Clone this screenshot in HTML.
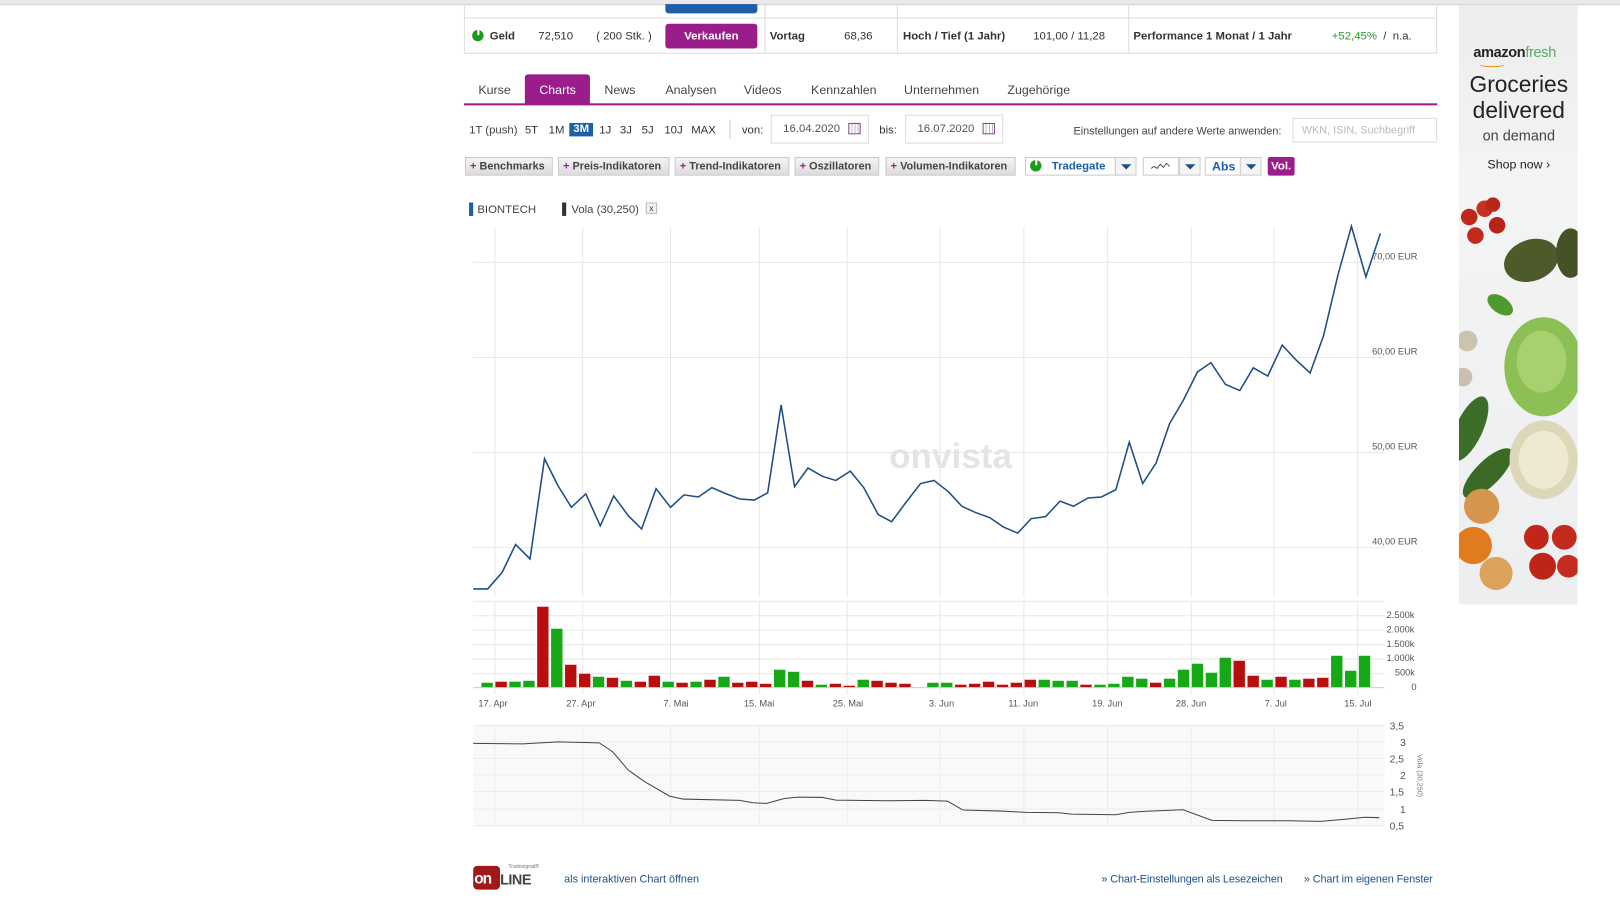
<!DOCTYPE html>
<html><head><meta charset="utf-8">
<style>
html,body{margin:0;padding:0;background:#fff;overflow:hidden;width:1620px;height:912px}
#w{position:absolute;left:0;top:0;width:1568px;height:883px;transform:scale(1.0332);transform-origin:0 0;font-family:"Liberation Sans",Arial,sans-serif;font-size:11px;color:#333}
.a{position:absolute;white-space:nowrap}
.b{font-weight:bold}
.btn{position:absolute;height:18px;top:152px;background:linear-gradient(#f4f4f4,#dcdcdc);border:1px solid #c8c8c8;box-sizing:border-box;font-size:10.5px;font-weight:bold;color:#444;line-height:16px;padding-left:4px}
.btn i{color:#9b1d8c;font-style:normal;font-weight:bold;margin-right:3px}
.wb{position:absolute;top:152px;height:18px;border:1px solid #ccc;box-sizing:border-box;background:#fff;color:#1a5fa8;font-weight:bold;line-height:16px}
.dd{position:absolute;top:152px;height:18px;width:21px;border:1px solid #ccc;box-sizing:border-box;background:#f4f4f4}
.dd:after{content:"";position:absolute;left:5px;top:6px;border-left:5px solid transparent;border-right:5px solid transparent;border-top:5px solid #1a4f8a}
.tab{position:absolute;top:80px;font-size:12px;color:#444}
.inp{position:absolute;top:111px;height:28px;border:1px solid #ddd;box-sizing:border-box;background:#fff;font-size:11px;color:#555;line-height:26px}
.lnk{color:#1f4f8f;font-size:10.5px}
</style></head><body><div id="w">
<div class="a" style="left:0;top:0;width:1568px;height:4px;background:#e9e9e9;border-bottom:1px solid #d0d0d0"></div>
<div class="a" style="left:449px;top:4px;width:942px;height:48px;border:1px solid #ddd;border-top:none;box-sizing:border-box"></div>
<div class="a" style="left:449px;top:17px;width:942px;height:1px;background:#ddd"></div>
<div class="a" style="left:740px;top:4px;width:1px;height:48px;background:#ddd"></div>
<div class="a" style="left:868px;top:4px;width:1px;height:48px;background:#ddd"></div>
<div class="a" style="left:1092px;top:4px;width:1px;height:48px;background:#ddd"></div>
<div class="a" style="left:644px;top:4px;width:89px;height:9px;background:#1a5fa8;border-radius:0 0 3px 3px"></div>
<div class="a" style="left:457px;top:29px;width:11px;height:11px;border-radius:50%;background:#1a9b1a"></div>
<div class="a" style="left:462px;top:28px;width:2px;height:6px;background:#fff"></div>
<div class="a b" style="left:474px;top:29px">Geld</div>
<div class="a" style="left:521px;top:29px">72,510</div>
<div class="a" style="left:577px;top:29px">( 200 Stk. )</div>
<div class="a b" style="left:644px;top:23px;width:89px;height:24px;background:#9b1d8c;color:#fff;text-align:center;line-height:24px;border-radius:3px">Verkaufen</div>
<div class="a b" style="left:745px;top:29px">Vortag</div>
<div class="a" style="left:817px;top:29px">68,36</div>
<div class="a b" style="left:874px;top:29px">Hoch / Tief (1 Jahr)</div>
<div class="a" style="left:1000px;top:29px">101,00 / 11,28</div>
<div class="a b" style="left:1097px;top:29px">Performance 1 Monat / 1 Jahr</div>
<div class="a" style="left:1289px;top:29px"><span style="color:#2a9a2a">+52,45%</span> &nbsp;/ &nbsp;n.a.</div>
<div class="a" style="left:508px;top:72px;width:63px;height:29px;background:#9b1d8c;border-radius:3px 3px 0 0"></div>
<div class="tab" style="left:463px">Kurse</div>
<div class="tab" style="left:522px;color:#fff">Charts</div>
<div class="tab" style="left:585px">News</div>
<div class="tab" style="left:644px">Analysen</div>
<div class="tab" style="left:720px">Videos</div>
<div class="tab" style="left:785px">Kennzahlen</div>
<div class="tab" style="left:875px">Unternehmen</div>
<div class="tab" style="left:975px">Zugehörige</div>
<div class="a" style="left:449px;top:100px;width:942px;height:2px;background:#9b1d8c"></div>
<div class="a" style="left:454px;top:120px;color:#444">1T (push)</div>
<div class="a" style="left:508px;top:120px">5T</div>
<div class="a" style="left:531px;top:120px">1M</div>
<div class="a b" style="left:551px;top:119px;width:23px;height:13px;background:#1a5fa8;color:#fff;text-align:center;line-height:13px">3M</div>
<div class="a" style="left:580px;top:120px">1J</div>
<div class="a" style="left:600px;top:120px">3J</div>
<div class="a" style="left:621px;top:120px">5J</div>
<div class="a" style="left:643px;top:120px">10J</div>
<div class="a" style="left:669px;top:120px">MAX</div>
<div class="a" style="left:706px;top:116px;width:1px;height:18px;background:#ccc"></div>
<div class="a" style="left:718px;top:120px">von:</div>
<div class="inp" style="left:746px;width:95px;padding-left:11px">16.04.2020</div>
<div class="a" style="left:821px;top:119px;width:10px;height:9px;border:1px solid #8a4a8a;background:repeating-linear-gradient(90deg,#fff 0 2px,#bbb 2px 3px)"></div>
<div class="a" style="left:851px;top:120px">bis:</div>
<div class="inp" style="left:876px;width:95px;padding-left:11px">16.07.2020</div>
<div class="a" style="left:951px;top:119px;width:10px;height:9px;border:1px solid #8a4a8a;background:repeating-linear-gradient(90deg,#fff 0 2px,#bbb 2px 3px)"></div>
<div class="a" style="left:1039px;top:121px;color:#444;font-size:10.5px">Einstellungen auf andere Werte anwenden:</div>
<div class="inp" style="left:1251px;width:140px;top:114px;height:24px;line-height:22px;padding-left:8px;color:#bbb;font-size:10.5px">WKN, ISIN, Suchbegriff</div>
<div class="btn" style="left:450px;width:85px"><i>+</i>Benchmarks</div>
<div class="btn" style="left:540px;width:108px"><i>+</i>Preis-Indikatoren</div>
<div class="btn" style="left:653px;width:111px"><i>+</i>Trend-Indikatoren</div>
<div class="btn" style="left:769px;width:82px"><i>+</i>Oszillatoren</div>
<div class="btn" style="left:857px;width:126px"><i>+</i>Volumen-Indikatoren</div>
<div class="wb" style="left:992px;width:88px;padding-left:25px">Tradegate</div>
<div class="a" style="left:997px;top:155px;width:11px;height:11px;border-radius:50%;background:#1a9b1a"></div>
<div class="a" style="left:1002px;top:154px;width:2px;height:6px;background:#fff"></div>
<div class="dd" style="left:1079px"></div>
<div class="wb" style="left:1106px;width:35px"><svg width="33" height="16"><polyline points="7,10 10,8 13,10 16,6 19,9 22,5 25,8" fill="none" stroke="#333" stroke-width="0.8"/></svg></div>
<div class="dd" style="left:1141px"></div>
<div class="wb" style="left:1166px;width:35px;padding-left:6px;font-size:12px">Abs</div>
<div class="dd" style="left:1200px"></div>
<div class="a b" style="left:1227px;top:152px;width:26px;height:18px;background:#9b1d8c;color:#fff;text-align:center;line-height:18px;border-radius:2px">Vol.</div>
<div class="a" style="left:454px;top:196px;width:4px;height:13px;background:#1a5fa8"></div>
<div class="a" style="left:462px;top:197px;color:#444">BIONTECH</div>
<div class="a" style="left:544px;top:196px;width:4px;height:13px;background:#333"></div>
<div class="a" style="left:553px;top:197px;color:#444">Vola (30,250)</div>
<div class="a" style="left:625px;top:196px;width:11px;height:11px;border:1px solid #bbb;box-sizing:border-box;background:#f2f2f2;font-size:8px;line-height:9px;text-align:center">x</div>
<svg class="a" style="left:0;top:0" width="1568" height="883">
<g stroke="#e8e8e8" stroke-width="1">
<line x1="479" y1="220" x2="479" y2="578"/><line x1="564" y1="220" x2="564" y2="578"/><line x1="649" y1="220" x2="649" y2="578"/><line x1="735" y1="220" x2="735" y2="578"/><line x1="820" y1="220" x2="820" y2="578"/><line x1="910" y1="220" x2="910" y2="578"/><line x1="991" y1="220" x2="991" y2="578"/><line x1="1072" y1="220" x2="1072" y2="578"/><line x1="1153" y1="220" x2="1153" y2="578"/><line x1="1233" y1="220" x2="1233" y2="578"/><line x1="1314" y1="220" x2="1314" y2="578"/>
<line x1="458" y1="254" x2="1340" y2="254"/><line x1="458" y1="346" x2="1340" y2="346"/><line x1="458" y1="438" x2="1340" y2="438"/><line x1="458" y1="530" x2="1340" y2="530"/>
<line x1="458" y1="582" x2="1340" y2="582"/><line x1="458" y1="596" x2="1340" y2="596"/><line x1="458" y1="610" x2="1340" y2="610"/><line x1="458" y1="624" x2="1340" y2="624"/><line x1="458" y1="638" x2="1340" y2="638"/><line x1="458" y1="652" x2="1340" y2="652"/>
<line x1="479" y1="582" x2="479" y2="672"/><line x1="564" y1="582" x2="564" y2="672"/><line x1="649" y1="582" x2="649" y2="672"/><line x1="735" y1="582" x2="735" y2="672"/><line x1="820" y1="582" x2="820" y2="672"/><line x1="910" y1="582" x2="910" y2="672"/><line x1="991" y1="582" x2="991" y2="672"/><line x1="1072" y1="582" x2="1072" y2="672"/><line x1="1153" y1="582" x2="1153" y2="672"/><line x1="1233" y1="582" x2="1233" y2="672"/><line x1="1314" y1="582" x2="1314" y2="672"/>
</g>
<line x1="458" y1="665.5" x2="1340" y2="665.5" stroke="#ccc"/>
<text x="920" y="453" font-family="Liberation Sans,sans-serif" font-size="34" font-weight="bold" fill="#e4e4e4" text-anchor="middle">onvista</text>
<polyline fill="none" stroke="#1f4e85" stroke-width="1.5" points="458,570 472,570 486,554 499,527 513,541 527,444 540,470 553,491 567,478 581,509 594,480 608,499 621,512 635,473 649,491 662,479 676,481 689,472 703,478 716,483 730,484 743,477 756,392 769,471 782,453 796,461 809,465 823,456 836,472 850,498 863,505 877,486 891,468 904,465 918,476 931,490 944,496 958,501 971,510 985,516 998,502 1012,500 1026,485 1039,490 1053,482 1066,481 1080,474 1093,428 1106,468 1119,448 1132,410 1145,388 1159,360 1172,351 1186,372 1200,378 1213,356 1227,364 1241,334 1254,348 1268,361 1281,325 1295,266 1308,219 1322,268 1336,226"/>
<g font-family="Liberation Sans,sans-serif" font-size="9" fill="#555">
<text x="1328" y="251">70,00 EUR</text><text x="1328" y="343">60,00 EUR</text><text x="1328" y="435">50,00 EUR</text><text x="1328" y="527">40,00 EUR</text>
<text x="1342" y="598">2.500k</text><text x="1342" y="612">2.000k</text><text x="1342" y="626">1.500k</text><text x="1342" y="640">1.000k</text><text x="1350" y="654">500k</text><text x="1366" y="668">0</text>
<text x="463" y="684">17. Apr</text><text x="548" y="684">27. Apr</text><text x="642" y="684">7. Mai</text><text x="720" y="684">15. Mai</text><text x="806" y="684">25. Mai</text><text x="899" y="684">3. Jun</text><text x="976" y="684">11. Jun</text><text x="1057" y="684">19. Jun</text><text x="1138" y="684">28. Jun</text><text x="1224" y="684">7. Jul</text><text x="1301" y="684">15. Jul</text>
</g>
<g fill="#16a816">
<rect x="466" y="660.8" width="11" height="4.2"/><rect x="493" y="659.8" width="11" height="5.2"/><rect x="506.4" y="658.9" width="11" height="6.1"/><rect x="533.4" y="608.5" width="11" height="56.5"/><rect x="573.8" y="655" width="11" height="10"/><rect x="600.8" y="658.9" width="11" height="6.1"/><rect x="641.2" y="659.8" width="11" height="5.2"/><rect x="668.2" y="659.8" width="11" height="5.2"/><rect x="695.2" y="655" width="11" height="10"/><rect x="749.1" y="648.2" width="11" height="16.8"/><rect x="762.6" y="650.2" width="11" height="14.8"/><rect x="789.5" y="662.7" width="11" height="2.3"/><rect x="830" y="657.9" width="11" height="7.1"/><rect x="897.4" y="660.8" width="11" height="4.2"/><rect x="910.8" y="660.8" width="11" height="4.2"/><rect x="1005.2" y="657.9" width="11" height="7.1"/><rect x="1018.7" y="658.9" width="11" height="6.1"/><rect x="1032.2" y="658.9" width="11" height="6.1"/><rect x="1059.1" y="662.7" width="11" height="2.3"/><rect x="1072.6" y="661.8" width="11" height="3.2"/><rect x="1086.1" y="655" width="11" height="10"/><rect x="1099.6" y="656.9" width="11" height="8.1"/><rect x="1126.5" y="656.9" width="11" height="8.1"/><rect x="1140" y="648.2" width="11" height="16.8"/><rect x="1153.5" y="642.4" width="11" height="22.6"/><rect x="1167" y="651.1" width="11" height="13.9"/><rect x="1180.4" y="636.6" width="11" height="28.4"/><rect x="1220.9" y="657.9" width="11" height="7.1"/><rect x="1247.8" y="657.9" width="11" height="7.1"/><rect x="1288.3" y="634.7" width="11" height="30.3"/><rect x="1301.8" y="649.2" width="11" height="15.8"/><rect x="1315.2" y="634.7" width="11" height="30.3"/>
</g>
<g fill="#b80e0e">
<rect x="479.5" y="659.8" width="11" height="5.2"/><rect x="519.9" y="587.2" width="11" height="77.8"/><rect x="546.9" y="643.4" width="11" height="21.6"/><rect x="560.4" y="652.1" width="11" height="12.9"/><rect x="587.3" y="656" width="11" height="9"/><rect x="614.3" y="659.8" width="11" height="5.2"/><rect x="627.8" y="654" width="11" height="11"/><rect x="654.7" y="660.8" width="11" height="4.2"/><rect x="681.7" y="657.9" width="11" height="7.1"/><rect x="708.6" y="660.8" width="11" height="4.2"/><rect x="722.1" y="659.8" width="11" height="5.2"/><rect x="735.6" y="661.8" width="11" height="3.2"/><rect x="776" y="658.9" width="11" height="6.1"/><rect x="803" y="661.8" width="11" height="3.2"/><rect x="816.5" y="663.7" width="11" height="1.3"/><rect x="843.4" y="658.9" width="11" height="6.1"/><rect x="856.9" y="660.8" width="11" height="4.2"/><rect x="870.4" y="661.8" width="11" height="3.2"/><rect x="924.3" y="662.7" width="11" height="2.3"/><rect x="937.8" y="661.8" width="11" height="3.2"/><rect x="951.3" y="659.8" width="11" height="5.2"/><rect x="964.8" y="662.7" width="11" height="2.3"/><rect x="978.2" y="660.8" width="11" height="4.2"/><rect x="991.7" y="657.9" width="11" height="7.1"/><rect x="1045.6" y="662.7" width="11" height="2.3"/><rect x="1113" y="660.8" width="11" height="4.2"/><rect x="1193.9" y="639.5" width="11" height="25.5"/><rect x="1207.4" y="654" width="11" height="11"/><rect x="1234.4" y="655" width="11" height="10"/><rect x="1261.3" y="656.9" width="11" height="8.1"/><rect x="1274.8" y="656" width="11" height="9"/>
</g>
<rect x="458" y="702" width="882" height="98" fill="#f9f9f9"/>
<g stroke="#ececec"><line x1="458" y1="702" x2="1340" y2="702"/><line x1="458" y1="718" x2="1340" y2="718"/><line x1="458" y1="734" x2="1340" y2="734"/><line x1="458" y1="750" x2="1340" y2="750"/><line x1="458" y1="766" x2="1340" y2="766"/><line x1="458" y1="783" x2="1340" y2="783"/><line x1="458" y1="799" x2="1340" y2="799"/>
<line x1="479" y1="702" x2="479" y2="800"/><line x1="564" y1="702" x2="564" y2="800"/><line x1="649" y1="702" x2="649" y2="800"/><line x1="735" y1="702" x2="735" y2="800"/><line x1="820" y1="702" x2="820" y2="800"/><line x1="910" y1="702" x2="910" y2="800"/><line x1="991" y1="702" x2="991" y2="800"/><line x1="1072" y1="702" x2="1072" y2="800"/><line x1="1153" y1="702" x2="1153" y2="800"/><line x1="1233" y1="702" x2="1233" y2="800"/><line x1="1314" y1="702" x2="1314" y2="800"/></g>
<polyline fill="none" stroke="#444" stroke-width="1" points="458,719.5 506,720 540,718 580,719 593,727.6 608,745.3 624,756.6 648,770.5 661,773.4 716,774.7 728.5,777 742,777.6 759,772.8 772,771.5 796,771.8 809,774.4 858,775 895,774.7 917,775.4 932,784 969,785 994,786.3 1025,786.6 1037,788 1080,788.6 1093,786.3 1105,785.4 1145,783.7 1173,794 1204,794.4 1247,794.4 1278,795 1303,792.8 1321,791 1335,791.4"/>
<g font-family="Liberation Sans,sans-serif" font-size="10" fill="#555">
<text x="1345" y="706">3,5</text><text x="1355" y="722">3</text><text x="1345" y="738">2,5</text><text x="1355" y="754">2</text><text x="1345" y="770">1,5</text><text x="1355" y="787">1</text><text x="1345" y="803">0,5</text>
</g>
<text x="0" y="0" font-family="Liberation Sans,sans-serif" font-size="7" fill="#777" transform="translate(1372,730) rotate(90)">Vola (30,250)</text>
</svg>
<div class="a" style="left:458px;top:838px;width:26px;height:23px;background:#a01818;border-radius:4px"></div>
<div class="a b" style="left:459px;top:842px;font-size:15px;color:#fff;letter-spacing:-1px">on</div>
<div class="a b" style="left:484px;top:843px;font-size:14px;color:#444;letter-spacing:-0.5px">LINE</div>
<div class="a" style="left:492px;top:836px;font-size:5px;color:#777">Tradesignal®</div>
<div class="a lnk" style="left:546px;top:845px">als interaktiven Chart öffnen</div>
<div class="a lnk" style="left:1066px;top:845px;letter-spacing:-0.1px">» Chart-Einstellungen als Lesezeichen</div>
<div class="a lnk" style="left:1262px;top:845px;letter-spacing:-0.1px">» Chart im eigenen Fenster</div>
<div class="a" style="left:1412px;top:5px;width:115px;height:580px;background:linear-gradient(#ededed,#f4f4f4 30%,#eceef0);overflow:hidden">
<div class="a b" style="left:14px;top:37px;font-size:14px;color:#222;letter-spacing:-0.3px">amazon<span style="color:#5aa865;font-weight:normal">fresh</span></div>
<div class="a" style="left:20px;top:55px;width:24px;height:4px;border-bottom:1.5px solid #e68a00;border-radius:0 0 50% 50%"></div>
<div class="a" style="left:8px;top:64px;font-size:22px;color:#222;width:100px;text-align:center;line-height:25px">Groceries<br>delivered</div>
<div class="a" style="left:8px;top:118px;font-size:14px;color:#444;width:100px;text-align:center">on demand</div>
<div class="a" style="left:8px;top:147px;font-size:12px;color:#222;width:100px;text-align:center">Shop now ›</div>
<svg class="a" style="left:0;top:185px" width="115" height="395">
<circle cx="10" cy="20" r="8" fill="#c1281c"/><circle cx="25" cy="12" r="8" fill="#c8301f"/><circle cx="37" cy="28" r="8" fill="#b8241a"/><circle cx="16" cy="38" r="8" fill="#c22a1e"/><circle cx="33" cy="8" r="7" fill="#b92619"/>
<ellipse cx="70" cy="62" rx="27" ry="20" fill="#4d5a2a" transform="rotate(-20 70 62)"/><ellipse cx="108" cy="55" rx="14" ry="24" fill="#445226"/>
<ellipse cx="40" cy="105" rx="14" ry="8" fill="#4f9a2c" transform="rotate(35 40 105)"/>
<circle cx="8" cy="140" r="10" fill="#ccc2b0"/><circle cx="4" cy="175" r="9" fill="#c9bfae"/>
<ellipse cx="82" cy="165" rx="38" ry="48" fill="#8cbf54"/><ellipse cx="80" cy="160" rx="24" ry="30" fill="#a8d06f"/>
<ellipse cx="10" cy="225" rx="13" ry="34" fill="#3c6e2a" transform="rotate(25 10 225)"/><ellipse cx="28" cy="268" rx="12" ry="32" fill="#3a6a26" transform="rotate(45 28 268)"/>
<ellipse cx="82" cy="255" rx="33" ry="38" fill="#dcd7b8"/><ellipse cx="82" cy="255" rx="24" ry="28" fill="#efe9d4"/>
<circle cx="22" cy="300" r="17" fill="#d6954c"/><circle cx="14" cy="338" r="18" fill="#e07c1e"/><circle cx="36" cy="365" r="16" fill="#dca35d"/>
<circle cx="75" cy="330" r="12" fill="#c0261a"/><circle cx="102" cy="330" r="12" fill="#c22a1d"/><circle cx="81" cy="358" r="13" fill="#bd2519"/><circle cx="106" cy="358" r="11" fill="#c52b1e"/>
</svg>
</div>
</div></body></html>
